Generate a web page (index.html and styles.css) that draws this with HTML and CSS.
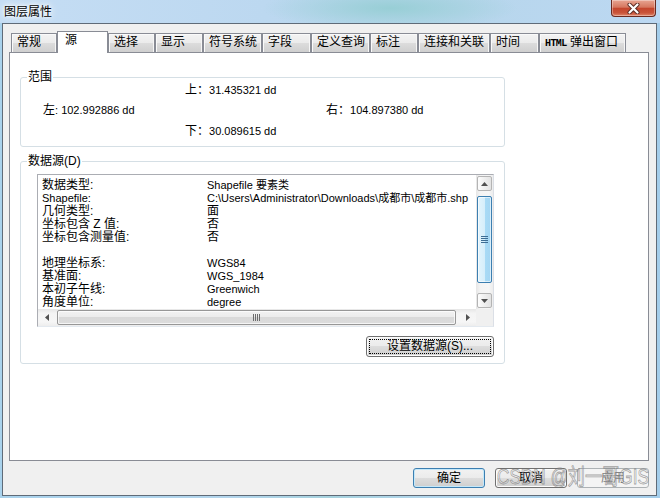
FILE: index.html
```html
<!DOCTYPE html>
<html lang="zh-CN">
<head>
<meta charset="utf-8">
<title>图层属性</title>
<link rel="stylesheet" href="styles.css">
</head>
<body>
<div class="window">
  <div class="titlebar">
    <span class="title">图层属性</span>
    <div class="close-btn">
      <svg width="13" height="11" viewBox="0 0 13 11">
        <path d="M2.5 1.5 L10.5 9.5 M10.5 1.5 L2.5 9.5" stroke="#5a2a22" stroke-width="4" stroke-linecap="round" fill="none"/>
        <path d="M2.5 1.5 L10.5 9.5 M10.5 1.5 L2.5 9.5" stroke="#ffffff" stroke-width="2.2" stroke-linecap="round" fill="none"/>
      </svg>
    </div>
  </div>
  <div class="client">
    <div class="tabs">
      <div class="tab">常规</div>
      <div class="tab active">源</div>
      <div class="tab">选择</div>
      <div class="tab">显示</div>
      <div class="tab">符号系统</div>
      <div class="tab">字段</div>
      <div class="tab">定义查询</div>
      <div class="tab">标注</div>
      <div class="tab">连接和关联</div>
      <div class="tab">时间</div>
      <div class="tab"><span class="mono">HTML</span> 弹出窗口</div>
    </div>
    <div class="panel">
      <fieldset class="group range">
        <legend>范围</legend>
        <div class="extent">
          <div class="e-top"><span class="k">上：</span>31.435321 dd</div>
          <div class="e-left"><span class="k">左</span>: 102.992886 dd</div>
          <div class="e-right"><span class="k">右：</span>104.897380 dd</div>
          <div class="e-bottom"><span class="k">下：</span>30.089615 dd</div>
        </div>
      </fieldset>
      <fieldset class="group source">
        <legend>数据源(D)</legend>
        <div class="listbox">
          <div class="list-content">
            <div class="row"><span class="l">数据类型:</span><span class="v">Shapefile 要素类</span></div>
            <div class="row"><span class="l lat">Shapefile:</span><span class="v">C:\Users\Administrator\Downloads\成都市\成都市.shp</span></div>
            <div class="row"><span class="l">几何类型:</span><span class="v cjk">面</span></div>
            <div class="row"><span class="l">坐标包含 Z 值:</span><span class="v cjk">否</span></div>
            <div class="row"><span class="l">坐标包含测量值:</span><span class="v cjk">否</span></div>
            <div class="row"></div>
            <div class="row"><span class="l">地理坐标系:</span><span class="v">WGS84</span></div>
            <div class="row"><span class="l">基准面:</span><span class="v">WGS_1984</span></div>
            <div class="row"><span class="l">本初子午线:</span><span class="v">Greenwich</span></div>
            <div class="row"><span class="l">角度单位:</span><span class="v">degree</span></div>
          </div>
          <div class="vscroll">
            <div class="sb-btn"><div class="box"><svg width="7" height="4" viewBox="0 0 7 4"><polygon points="0,4 3.5,0 7,4" fill="#505050"/></svg></div></div>
            <div class="vtrack">
              <div class="vthumb">
                <svg width="7" height="7" viewBox="0 0 7 7"><path d="M0 0.5H7M0 2.5H7M0 4.5H7M0 6.5H7" stroke="#3e6d94" stroke-width="1"/></svg>
              </div>
            </div>
            <div class="sb-btn"><div class="box"><svg width="7" height="4" viewBox="0 0 7 4"><polygon points="0,0 7,0 3.5,4" fill="#505050"/></svg></div></div>
          </div>
          <div class="hscroll">
            <div class="sb-btn"><svg width="4" height="7" viewBox="0 0 4 7"><polygon points="4,0 4,7 0,3.5" fill="#505050"/></svg></div>
            <div class="htrack">
              <div class="hthumb">
                <svg width="7" height="7" viewBox="0 0 7 7"><path d="M0.5 0V7M2.5 0V7M4.5 0V7M6.5 0V7" stroke="#6e6e6e" stroke-width="1"/></svg>
              </div>
            </div>
            <div class="sb-btn"><svg width="4" height="7" viewBox="0 0 4 7"><polygon points="0,0 0,7 4,3.5" fill="#505050"/></svg></div>
          </div>
          <div class="corner"></div>
        </div>
        <div class="btn-row">
          <button class="btn btn-set"><span class="focus">设置数据源(S)...</span></button>
        </div>
      </fieldset>
    </div>
    <div class="footer">
      <button class="btn default">确定</button>
      <button class="btn">取消</button>
      <button class="btn" disabled>应用</button>
    </div>
    <div class="watermark">CSDN @刘一哥GIS</div>
  </div>
</div>
</body>
</html>
```
FILE: styles.css
```css
* { box-sizing: border-box; }
html, body { margin: 0; padding: 0; }
body {
  width: 660px;
  height: 498px;
  overflow: hidden;
  font-family: "Liberation Sans", "Noto Sans CJK SC", sans-serif;
  font-size: 12px;
  color: #000;
  background: linear-gradient(to right, #a9d2ec 0%, #b3d5ec 35%, #a6d2de 50%, #b2d6ec 65%, #a4cdea 100%);
}
.window {
  width: 660px;
  height: 498px;
  display: flex;
  flex-direction: column;
}
.titlebar {
  height: 23px;
  flex: none;
  display: flex;
  justify-content: space-between;
  align-items: flex-start;
  background:
    radial-gradient(ellipse 170px 30px at 390px 8px, rgba(150, 206, 212, 0.95), rgba(150, 206, 212, 0) 75%),
    linear-gradient(to right, #c5ddf4, #bcd8f0 40%, #b7d6ec 70%, #bcd8f2);
}
.title {
  padding-left: 4px;
  padding-top: 1px;
  line-height: 22px;
  font-size: 12px;
  text-shadow: 0 0 6px #fff, 0 0 3px #fff, 0 0 10px rgba(255, 255, 255, 0.9);
}
.close-btn {
  width: 45px;
  height: 17px;
  margin-right: 4px;
  border: 1px solid #6a2a20;
  border-top: none;
  border-radius: 0 0 4px 4px;
  background: linear-gradient(#e8a592, #d6775f 45%, #c4462d 52%, #c9543a 80%, #e0866a);
  box-shadow: inset 0 0 0 1px rgba(255, 255, 255, 0.35);
  display: flex;
  align-items: center;
  justify-content: center;
}
.client {
  margin: 0 3px 2px 2px;
  height: 473px;
  border: 1px solid #5f6b78;
  background: #f0f0f0;
  padding: 7px 7px 0 6px;
  position: relative;
}
.tabs {
  display: grid;
  grid-template-columns: 46px 51px 47px 48px 59px 49px 59px 48px 72px 49px 87px;
  height: 21px;
  align-items: end;
  margin-left: 2px;
  position: relative;
  z-index: 1;
}
.tab {
  height: 19px;
  border: 1px solid #898c95;
  border-bottom: none;
  background: linear-gradient(#f3f3f3, #ebebeb 50%, #dddddd 50%, #cfcfcf);
  box-shadow: inset 1px 1px 0 #fafafa, inset -1px 0 0 #f6f6f6;
  padding-left: 5px;
  line-height: 17px;
  white-space: nowrap;
}
.tab.active {
  height: 22px;
  margin-bottom: -1px;
  background: #fff;
  box-shadow: none;
  padding-left: 7px;
}
.mono {
  font-family: "Liberation Mono", monospace;
  font-size: 10px;
  font-weight: bold;
  letter-spacing: -0.6px;
}
.panel {
  height: 409px;
  border: 1px solid #898c95;
  background: #fff;
  padding: 17px 0 0 10px;
}
.group {
  margin: 0;
  padding: 0 0 6px 0;
  border: 1px solid #d5dfe5;
  border-radius: 3px;
  width: 485px;
  min-inline-size: 0;
}
.group legend {
  margin-left: 6px;
  padding: 0 1px;
  line-height: 15px;
  font-size: 12px;
}
.extent {
  display: grid;
  grid-template-columns: 22px 142px 141px 1fr;
  grid-template-rows: 20px 21px 20px;
  margin-top: -5px;
  margin-bottom: -1px;
  align-items: center;
  font-size: 11px;
  line-height: 15px;
  white-space: nowrap;
}
.k { font-size: 12px; }
.e-top { grid-column: 3; grid-row: 1; }
.e-left { grid-column: 2; grid-row: 2; }
.e-right { grid-column: 4; grid-row: 2; }
.e-bottom { grid-column: 3; grid-row: 3; }
.source { margin-top: 7px; }
.listbox {
  margin: 5px 0 0 16px;
  width: 457px;
  height: 153px;
  border: 1px solid;
  border-color: #abadb3 #dbdfe6 #e3e9ef #abadb3;
  background: #fff;
  display: grid;
  grid-template-columns: 438px 17px;
  grid-template-rows: 134px 17px;
}
.list-content {
  padding: 4px 0 0 4px;
  overflow: hidden;
  min-width: 0;
}
.row {
  display: flex;
  height: 13px;
  line-height: 13px;
  white-space: nowrap;
}
.row .l {
  flex: none;
  width: 165px;
  font-size: 12px;
}
.row .l.lat { font-size: 11px; }
.row .v { font-size: 11px; }
.row .v.cjk { font-size: 12px; }
.vscroll {
  display: flex;
  flex-direction: column;
  background: linear-gradient(to right, #e6e6e6, #f4f4f4 25%, #f6f6f6 75%, #ededed);
}
.sb-btn {
  flex: none;
  height: 17px;
  display: flex;
  align-items: center;
  justify-content: center;
}
.vscroll .sb-btn .box {
  width: 15px;
  height: 15px;
  border: 1px solid #b4b4b4;
  border-radius: 2px;
  background: linear-gradient(to right, #fdfdfd, #efefef 50%, #e3e3e3);
  display: flex;
  align-items: center;
  justify-content: center;
}
.vtrack {
  flex: 1;
  padding-top: 4px;
}
.vthumb {
  margin: 0 1px;
  height: 87px;
  border: 1px solid #3c7fb1;
  border-radius: 2px;
  background: linear-gradient(to right, #e3f4fc, #d6eefb 50%, #a9dbf6 50%, #a4d5f2);
  box-shadow: inset 0 0 0 1px rgba(255, 255, 255, 0.6);
  display: flex;
  align-items: center;
  justify-content: center;
}
.hscroll {
  display: flex;
  background: linear-gradient(#e6e6e6, #f4f4f4 25%, #f6f6f6 75%, #ededed);
}
.hscroll .sb-btn { width: 17px; }
.htrack {
  flex: 1;
  padding: 1px 2px;
}
.hthumb {
  width: 399px;
  height: 15px;
  border: 1px solid #979797;
  border-radius: 2px;
  background: linear-gradient(#f2f2f2, #ebebeb 50%, #d9d9d9 50%, #dcdcdc);
  box-shadow: inset 0 0 0 1px rgba(255, 255, 255, 0.7);
  display: flex;
  align-items: center;
  justify-content: center;
}
.corner { background: #f0f0f0; }
.btn-row {
  display: flex;
  justify-content: flex-end;
  margin: 9px 10px 0 0;
}
.btn {
  font-family: inherit;
  font-size: 12px;
  color: #000;
  padding: 0;
  margin: 0;
  border: 1px solid #707070;
  border-radius: 3px;
  background: linear-gradient(#f2f2f2, #ebebeb 50%, #dddddd 50%, #cfcfcf);
  box-shadow: inset 0 0 0 1px #fcfcfc;
}
.btn-set {
  width: 128px;
  height: 21px;
  padding: 2px;
}
.btn-set .focus {
  display: block;
  height: 100%;
  border: 1px dotted #000;
  line-height: 13px;
}
.footer {
  display: flex;
  justify-content: flex-end;
  gap: 10px;
  margin-top: 7px;
}
.footer .btn {
  width: 72px;
  height: 20px;
  line-height: 16px;
}
.btn.default {
  border-color: #3c7fb1;
  box-shadow: inset 0 0 0 1px #c4e8fa;
}
.btn:disabled {
  border-color: #adb2b5;
  background: #f4f4f4;
  color: #838383;
  box-shadow: none;
}
.watermark {
  position: absolute;
  left: 494px;
  top: 442px;
  font-family: "Liberation Sans", "Noto Sans CJK SC", sans-serif;
  font-size: 22px;
  line-height: 22px;
  white-space: nowrap;
  color: rgba(255, 255, 255, 0.25);
  -webkit-text-stroke: 0.8px rgba(100, 100, 100, 0.6);
  transform: scaleX(0.78);
  transform-origin: left top;
  pointer-events: none;
}
```
